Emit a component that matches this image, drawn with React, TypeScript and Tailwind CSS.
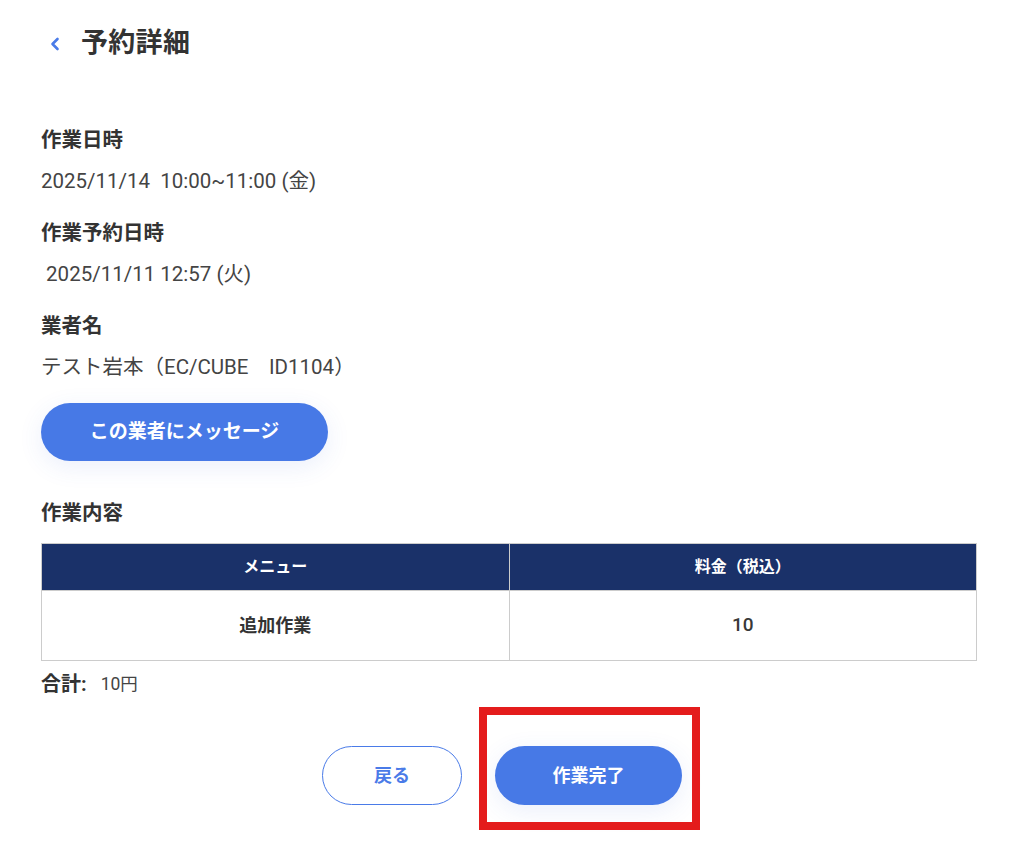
import React from 'react';

const font = { fontFamily: 'Roboto, "Noto Sans CJK JP", sans-serif' };

function Field({ label, value, className = '' }: { label: string; value: string; className?: string }) {
  return (
    <div className={className}>
      <div className="text-[20.5px] font-bold leading-[28px] text-[#333]">{label}</div>
      <div className="mt-[13px] text-[20.5px] leading-[28px] text-[#444] whitespace-pre">{value}</div>
    </div>
  );
}

export default function App() {
  return (
    <div className="min-h-[845px] bg-white text-[#333]" style={font}>
      <div className="w-[936px] ml-[41px]">
        {/* Header */}
        <header className="flex items-center h-[88px] pb-[1px]">
          <button className="flex items-center justify-center w-[30px] h-[30px] -ml-[1px] mr-[11px] text-[#4a7be8]">
            <svg width="14" height="16" viewBox="0 0 14 16" fill="none">
              <path d="M9.5 3L4.5 8l5 5" stroke="currentColor" strokeWidth="2.6" strokeLinecap="round" strokeLinejoin="round" />
            </svg>
          </button>
          <h1 className="text-[27px] font-bold text-[#333] tracking-[0.3px]">予約詳細</h1>
        </header>

        <div className="pt-[38px]">
          <Field label="作業日時" value="2025/11/14  10:00~11:00 (金)" />
          <Field className="mt-[24px]" label="作業予約日時" value=" 2025/11/11 12:57 (火)" />
          <Field className="mt-[24px]" label="業者名" value="テスト岩本（EC/CUBE　ID1104）" />

          <button className="mt-[22px] w-[287px] h-[58px] rounded-full bg-[#4779e6] text-white text-[19px] font-bold shadow-[0_6px_24px_rgba(60,100,220,0.10)]">
            この業者にメッセージ
          </button>

          <div className="mt-[38px] text-[20.5px] font-bold leading-[28px] text-[#333]">作業内容</div>

          <table className="mt-[16px] w-full border-collapse border border-[#cccccc]">
            <thead>
              <tr className="bg-[#1a3169] text-white h-[47px]">
                <th className="w-1/2 border-r border-[#cccccc] text-[16px] font-bold">メニュー</th>
                <th className="w-1/2 text-[16px] font-bold">料金（税込）</th>
              </tr>
            </thead>
            <tbody>
              <tr className="h-[70px]">
                <td className="border-r border-t border-[#cccccc] text-center text-[18px] font-bold text-[#333]">追加作業</td>
                <td className="border-t border-[#cccccc] text-center text-[19px] font-medium text-[#383838]">10</td>
              </tr>
            </tbody>
          </table>

          <div className="mt-[9px] flex items-center gap-[14px] h-[28px]">
            <span className="text-[20px] font-bold text-[#333]">合計:</span>
            <span className="text-[17.5px] text-[#444]">10円</span>
          </div>

          <div className="mt-[48px] flex justify-center gap-[33px] pr-[14px]">
            <button className="w-[140px] h-[59px] rounded-full border border-[#4a7be8] bg-white text-[#4a7be8] text-[18px] font-bold">
              戻る
            </button>
            <div className="relative">
              <button className="w-[187px] h-[59px] rounded-full bg-[#4779e6] text-white text-[18px] font-bold shadow-[0_6px_24px_rgba(60,100,220,0.10)]">
                作業完了
              </button>
              <div className="pointer-events-none absolute -left-[16px] -right-[18px] -top-[39px] -bottom-[25px] border-[8px] border-[#e41c1c]" />
            </div>
          </div>
        </div>
      </div>
    </div>
  );
}
